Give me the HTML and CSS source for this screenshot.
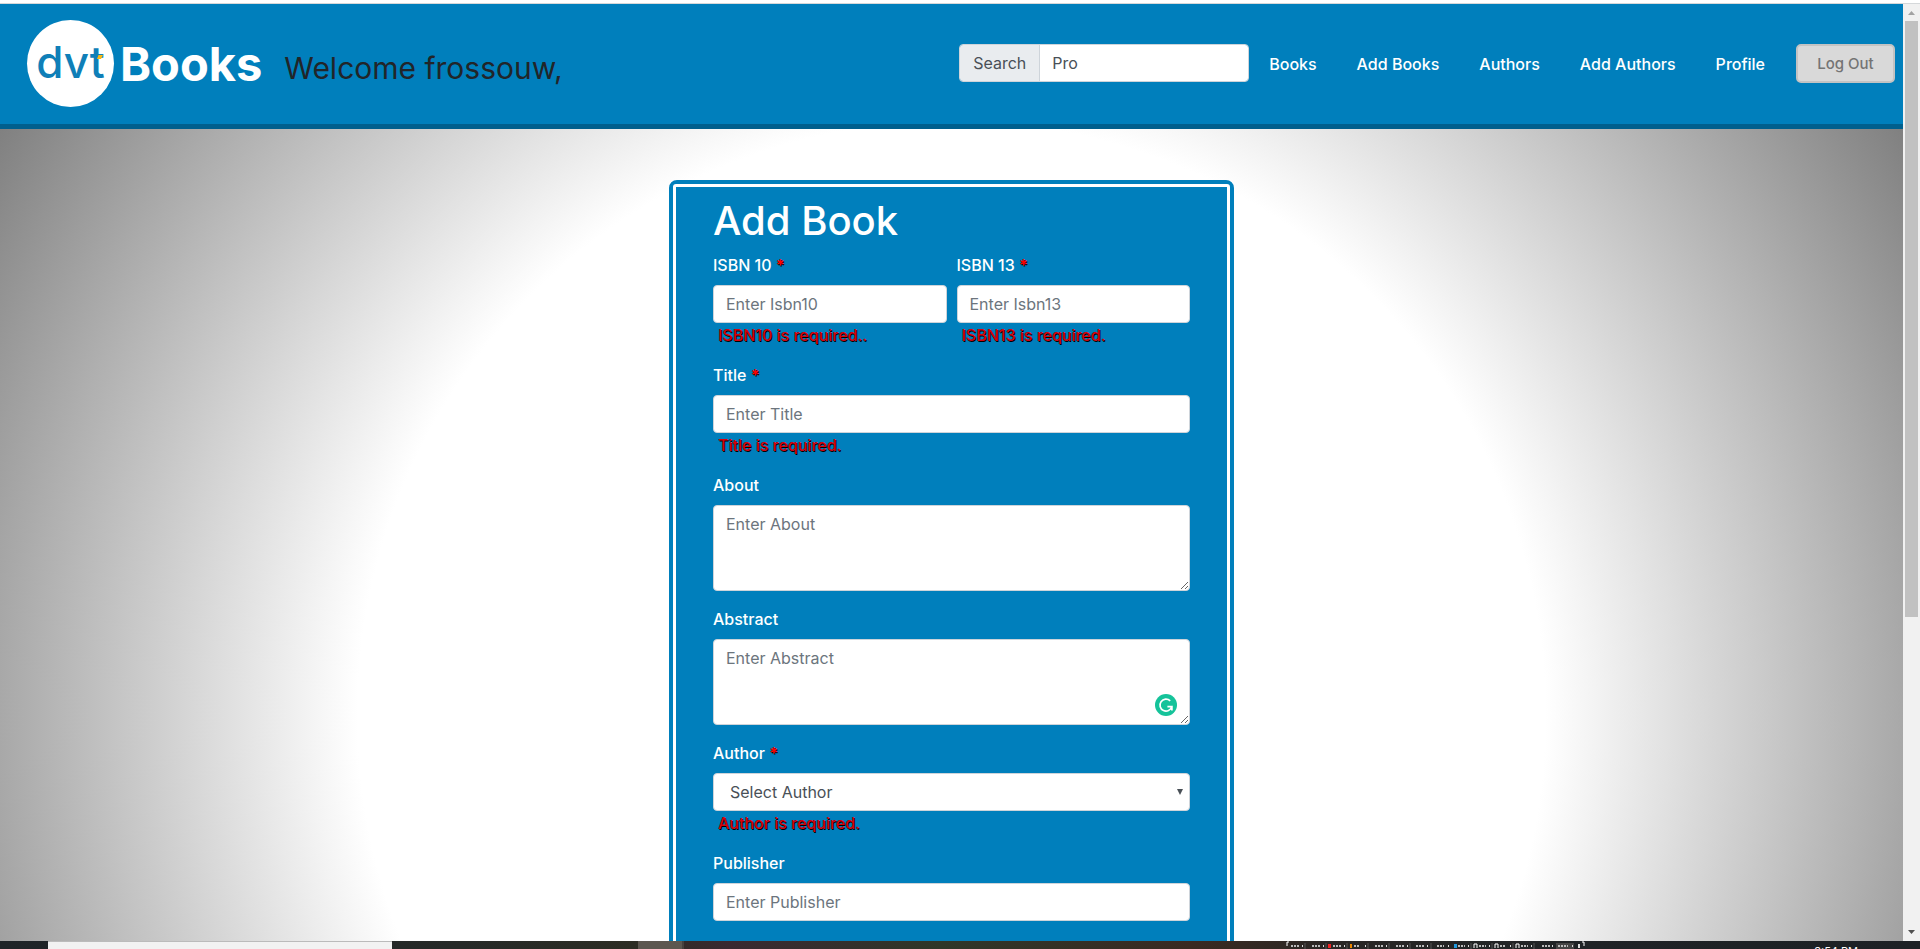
FILE: index.html
```html
<!DOCTYPE html>
<html lang="en">
<head>
<meta charset="utf-8">
<title>DVT Books - Add Book</title>
<link rel="stylesheet" href="styles.css">
</head>
<body>
<div class="window">
  <div class="page">
    <header class="navbar">
      <a class="brand" href="#">
        <span class="brand-mark">dvt
          <svg class="brand-tick" viewBox="0 0 6 4" aria-hidden="true"><path d="M1.5 0H6L4 4H0z" fill="#fdb913"/></svg>
        </span>
        <span class="brand-name">Books</span>
      </a>
      <span class="welcome">Welcome frossouw,</span>
      <form class="search">
        <label class="search-label" for="search">Search</label>
        <input class="search-input" id="search" type="text" value="Pro">
      </form>
      <nav class="links">
        <a href="#">Books</a>
        <a href="#">Add Books</a>
        <a href="#">Authors</a>
        <a href="#">Add Authors</a>
        <a href="#">Profile</a>
      </nav>
      <button class="logout" type="button">Log Out</button>
    </header>
    <main class="content">
      <form class="card">
        <div class="card-body">
          <h1 class="title">Add Book</h1>
          <div class="row">
            <div class="group">
              <label for="isbn10">ISBN 10 <span class="star">*</span></label>
              <input class="control" id="isbn10" type="text" placeholder="Enter Isbn10">
              <div class="error">ISBN10 is required..</div>
            </div>
            <div class="group">
              <label for="isbn13">ISBN 13 <span class="star">*</span></label>
              <input class="control" id="isbn13" type="text" placeholder="Enter Isbn13">
              <div class="error">ISBN13 is required.</div>
            </div>
          </div>
          <div class="group">
            <label for="title">Title <span class="star">*</span></label>
            <input class="control" id="title" type="text" placeholder="Enter Title">
            <div class="error">Title is required.</div>
          </div>
          <div class="group">
            <label for="about">About</label>
            <textarea class="control" id="about" rows="3" placeholder="Enter About"></textarea>
          </div>
          <div class="group">
            <label for="abstract">Abstract</label>
            <div class="field">
              <textarea class="control" id="abstract" rows="3" placeholder="Enter Abstract"></textarea>
              <svg class="checker" viewBox="0 0 22 22" aria-hidden="true"><circle cx="11" cy="11" r="11" fill="#15c39a"/><path d="M15.2 6.8A6 6 0 1 0 16.8 12.6H12.4M16.9 16.6V12.6" fill="none" stroke="#fff" stroke-width="1.7"/></svg>
            </div>
          </div>
          <div class="group">
            <label for="author">Author <span class="star">*</span></label>
            <div class="field">
              <select class="control" id="author"><option>Select Author</option></select>
              <svg class="caret" viewBox="0 0 6 6" aria-hidden="true"><path d="M0 0H6L3 6z" fill="#495057"/></svg>
            </div>
            <div class="error">Author is required.</div>
          </div>
          <div class="group">
            <label for="publisher">Publisher</label>
            <input class="control" id="publisher" type="text" placeholder="Enter Publisher">
          </div>
        </div>
      </form>
    </main>
  </div>
  <div class="scrollbar" aria-hidden="true">
    <svg class="arrow" viewBox="0 0 17 17"><path d="M5 11L8.500 7L12 11z" fill="#a3a3a3"/></svg>
    <div class="track"><div class="thumb"></div></div>
    <svg class="arrow" viewBox="0 0 17 17"><path d="M5 6H12L8.500 10z" fill="#505050"/></svg>
  </div>
</div>
<div class="taskbar">
  <div class="task-search"></div>
  <div class="task-active"></div>
  <svg class="task-tabs" viewBox="0 0 300 8" aria-hidden="true">
    <rect x="270" y="2" width="18" height="6" fill="#444"/>
    <path d="M1 5V1H3M296 1H298V5" fill="none" stroke="#fff"/>
    <path d="M5 5H13M26 5H34M47 5H55M68 5H74M89 5H97M110 5H118M130 5H138M151 5H158M172 5H179M193 5H200M214 5H220M235 5H242M256 5H264M272 5H282" stroke="#bbb" stroke-width="2" stroke-dasharray="2 1"/>
    <path d="M16 5h1M37 5h1M58 5h1M79 5h1M100 5h1M121 5h1M141 5h1M162 5h1M182 5h1M203 5h1M224 5h1M245 5h1M266 5h1M286 5h1M293 3v4" stroke="#ddd" stroke-width="2"/>
    <path d="M19 2v6M40 2v6M61 2v6M82 2v6M103 2v6M124 2v6M145 2v6M185 2v6M206 2v6M227 2v6M248 2v6" stroke="#555"/>
    <rect x="42" y="3" width="3" height="4" fill="#e22"/><rect x="64" y="3" width="2" height="4" fill="#e80"/><rect x="168" y="3" width="3" height="4" fill="#29d"/>
    <path d="M188 7V3h3v4M209 7V3h3v4M230 7V3h3v4" fill="none" stroke="#fff"/>
  </svg>
  <span class="clock">3:54 PM</span>
</div>
</body>
</html>
```
FILE: styles.css
```css
* { box-sizing: border-box; }

body {
  margin: 0;
  height: 100vh;
  display: flex;
  flex-direction: column;
  overflow: hidden;
  background: #fff;
  color: #212529;
  font: 400 16px/24px Inter, "Open Sans", sans-serif;
}

button, input, textarea, select { font: inherit; }

.window {
  flex: 1;
  min-height: 0;
  display: flex;
  margin-top: 3px;
  border-top: 1px solid #d5d8da;
}

.page {
  flex: 1;
  min-width: 0;
  overflow: hidden;
  background: radial-gradient(circle 1188px at 50% 711px, #fff 50%, #6f6f6f 100%);
}

.navbar {
  display: flex;
  align-items: center;
  padding: 16px 8px 17px 27px;
  background: #007fbc;
  border-bottom: 5px solid #005f8d;
}

.brand {
  display: flex;
  align-items: center;
  gap: 6px;
  color: #fff;
  text-decoration: none;
}

.brand-mark {
  position: relative;
  width: 87px;
  height: 87px;
  border-radius: 50%;
  background: #fff;
  color: #0f7fb8;
  font-size: 44px;
  line-height: 84px;
  font-weight: 500;
  text-align: center;
}

.brand-tick {
  position: absolute;
  right: 11px;
  top: 35px;
  width: 6px;
  height: 4px;
}

.brand-name {
  font-size: 47px;
  line-height: 60px;
  font-weight: 700;
}

.welcome {
  margin-left: 22px;
  padding-top: 9px;
  font-size: 30px;
  line-height: 36px;
  font-weight: 400;
}

.search {
  display: flex;
  width: 290px;
  height: 38px;
  margin: 0 20px 2px auto;
  border: 1px solid #ced4da;
  border-radius: 4px;
  overflow: hidden;
}

.search-label {
  padding: 6px 13px;
  background: #e9ecef;
  border-right: 1px solid #ced4da;
  color: #495057;
}

.search-input {
  flex: 1;
  min-width: 0;
  padding: 6px 12px;
  border: 0;
  color: #495057;
  background: #fff;
}

.links {
  display: flex;
  gap: 40px;
  margin-right: 31px;
  font-weight: 500;
}

.links a { color: #fff; text-decoration: none; }

.logout {
  width: 99px;
  height: 39px;
  padding: 0;
  border: 2px solid #c3c3c3;
  border-radius: 5px;
  background: #d9d9d9;
  color: #747474;
  font-size: 15px;
  font-weight: 500;
}

.content {
  display: flex;
  justify-content: center;
  padding-top: 51px;
}

.card {
  width: 565px;
  border: 4px solid #007fbc;
  border-radius: 8px;
  background: #007fbc;
}

.card-body {
  padding: 10px 37px 64px;
  border: 3px solid #fff;
  border-radius: 3px;
  color: #fff;
}

.title {
  margin: 0 0 8px;
  font-size: 40px;
  line-height: 48px;
  font-weight: 500;
}

.row { display: flex; gap: 10px; }
.row .group { flex: 1; min-width: 0; }
.group { margin-bottom: 16px; }

.group label {
  display: block;
  margin-bottom: 8px;
  font-weight: 500;
}

.star {
  color: #f00;
  font-weight: 700;
  text-shadow: 1px 1px #000;
}

.control {
  display: block;
  width: 100%;
  height: 38px;
  padding: 6px 12px;
  border: 1px solid #ced4da;
  border-radius: 4px;
  background: #fff;
  color: #495057;
}

.control::placeholder { color: #6c757d; opacity: 1; }
textarea.control { height: 86px; resize: vertical; }
select.control { padding-left: 16px; appearance: none; }

.field { position: relative; }

.checker {
  position: absolute;
  right: 13px;
  bottom: 9px;
  width: 22px;
  height: 22px;
}

.caret {
  position: absolute;
  right: 7px;
  top: 16px;
  width: 6px;
  height: 6px;
}

.error {
  padding-left: 5px;
  color: #d8000b;
  font-weight: 500;
  text-shadow: 1px 1px #000;
}

.scrollbar {
  width: 17px;
  display: flex;
  flex-direction: column;
  background: #f1f1f1;
}

.arrow { width: 17px; height: 17px; }
.track { flex: 1; padding: 0 2px; }
.thumb { height: 66%; background: #c1c1c1; }

.taskbar {
  display: flex;
  height: 8px;
  padding-left: 48px;
  overflow: hidden;
  background: linear-gradient(90deg, #1f2428 0%, #262a28 24%, #2c2d24 33%, #3a2930 38%, #2f3729 49%, #3a2a22 62%, #292725 70%, #1f2326 82%, #1d2125 100%);
}

.task-search { width: 344px; background: #f2f2f2; border-top: 1px solid #bbb; }
.task-active { width: 46px; margin-left: 246px; background: #5c5750; border-right: 2px solid #46413e; }
.task-tabs { width: 300px; height: 8px; margin-left: auto; }

.clock {
  margin: 3px 62px 0 228px;
  color: #fff;
  font-size: 11px;
  line-height: 14px;
}
```
